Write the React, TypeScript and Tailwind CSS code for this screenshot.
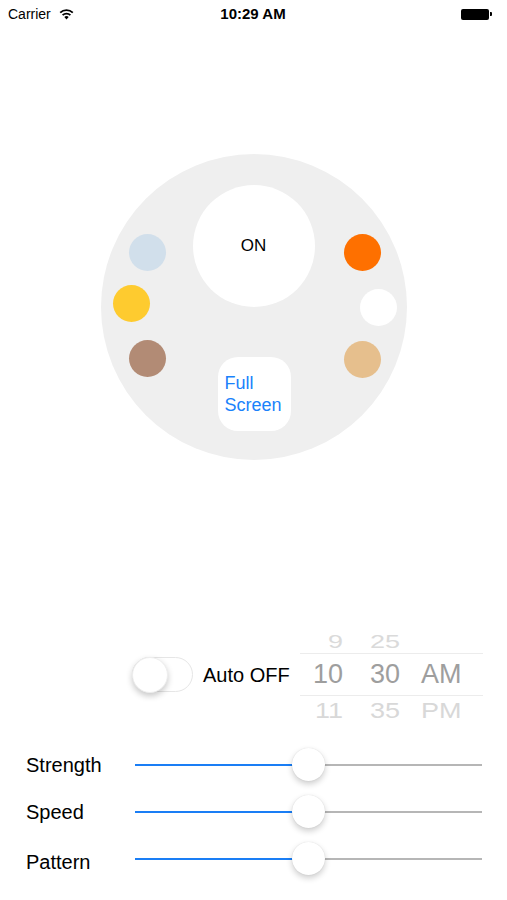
import React from 'react';

const font = { fontFamily: '"Liberation Sans", Arial, sans-serif' };

function StatusBar() {
  return (
    <div className="flex h-[28px] items-center px-[8px] text-[14px] text-black">
      <div className="flex flex-1 items-center gap-[8px]">
        <span>Carrier</span>
        <svg width="15" height="12" viewBox="0 0 15 12">
          <path d="M7.5 11.5 L5.3 9 A3.2 3.2 0 0 1 9.7 9 Z" fill="#000" />
          <path d="M3.6 7.2 A5.6 5.6 0 0 1 11.4 7.2" stroke="#000" strokeWidth="1.8" fill="none" />
          <path d="M1.2 4.6 A9 9 0 0 1 13.8 4.6" stroke="#000" strokeWidth="1.8" fill="none" />
        </svg>
      </div>
      <div className="pl-[6px] text-[15px] font-semibold">10:29 AM</div>
      <div className="flex flex-1 items-center justify-end pr-[7px]">
        <div className="h-[11px] w-[28px] rounded-[2px] bg-black" />
        <div className="ml-[1px] h-[4px] w-[2px] rounded-r-[1px] bg-black" />
      </div>
    </div>
  );
}

function Dot({ className }: { className: string }) {
  return <div className={`absolute h-[37px] w-[37px] rounded-full ${className}`} />;
}

function Wheel() {
  return (
    <div className="mt-[126px] flex justify-center">
      <div className="relative h-[306px] w-[306px] rounded-full bg-[#efefef]">
        <div className="absolute left-[92px] top-[31px] flex h-[122px] w-[122px] items-center justify-center rounded-full bg-white text-[17px] text-black">
          ON
        </div>
        <Dot className="left-[28px] top-[80px] bg-[#d1dfeb]" />
        <Dot className="left-[12px] top-[131px] bg-[#fecb2f]" />
        <Dot className="left-[28px] top-[186px] bg-[#b28b75]" />
        <Dot className="left-[243px] top-[80px] bg-[#fe7000]" />
        <Dot className="left-[259px] top-[135px] bg-white" />
        <Dot className="left-[243px] top-[187px] bg-[#e6bf8d]" />
        <div className="absolute left-[117px] top-[203px] flex h-[74px] w-[73px] flex-col justify-center rounded-[20px] bg-white pl-[7px] text-[18px] leading-[22px] text-[#1a82fb]">
          <span>Full</span>
          <span>Screen</span>
        </div>
      </div>
    </div>
  );
}

function Picker() {
  return (
    <div className="flex h-[95px] w-[183px] flex-col overflow-hidden text-[27px]">
      <div className="flex h-[28px] items-center text-[#dadada] origin-bottom scale-y-[0.7] translate-y-[-2px]">
        <span className="w-[43px] text-right">9</span>
        <span className="ml-[25px] w-[34px] text-center">25</span>
      </div>
      <div className="flex h-[43px] items-center border-y border-[#ececec] text-[#9e9e9e]">
        <span className="w-[43px] text-right">10</span>
        <span className="ml-[25px] w-[34px] text-center">30</span>
        <span className="ml-[19px]">AM</span>
      </div>
      <div className="flex h-[24px] items-start pt-[5px] text-[#d8d8d8] origin-top scale-y-[0.8]">
        <span className="w-[43px] text-right leading-[27px]">11</span>
        <span className="ml-[25px] w-[34px] text-center leading-[27px]">35</span>
        <span className="ml-[19px] leading-[27px]">PM</span>
      </div>
    </div>
  );
}

function AutoOffRow() {
  return (
    <div className="mt-[165px] flex items-start pl-[132px]">
      <div className="mt-[28px] flex h-[43px] items-center">
        <div className="flex h-[35px] w-[61px] items-center rounded-full border-[1.5px] border-[#e6e6e6] bg-white">
          <div className="h-[36px] w-[36px] -ml-[1.5px] rounded-full bg-white shadow-[0_3px_6px_rgba(0,0,0,0.22)] border border-[#eeeeee]" />
        </div>
        <span className="ml-[10px] w-[97px] text-[20px] text-black">Auto OFF</span>
      </div>
      <Picker />
    </div>
  );
}

function SliderRow({ label, labelClass = '' }: { label: string; labelClass?: string }) {
  return (
    <div className="flex h-[47px] items-center">
      <span className={`w-[135px] pl-[26px] text-[20px] text-black ${labelClass}`}>{label}</span>
      <div className="relative flex h-[33px] w-[347px] items-center">
        <div className="h-[2px] w-[174px] bg-[#1a7ef5]" />
        <div className="h-[2px] flex-1 bg-[#b6b6b6]" />
        <div className="absolute left-[157px] top-0 h-[33px] w-[33px] rounded-full bg-white shadow-[0_3px_6px_rgba(0,0,0,0.2),0_0_1px_rgba(0,0,0,0.15)]" />
      </div>
    </div>
  );
}

export default function App() {
  return (
    <div className="h-[900px] w-[507px] overflow-hidden bg-white" style={font}>
      <StatusBar />
      <Wheel />
      <AutoOffRow />
      <div className="mt-[21px] flex flex-col">
        <SliderRow label="Strength" />
        <SliderRow label="Speed" />
        <SliderRow label="Pattern" labelClass="pt-[7px]" />
      </div>
    </div>
  );
}
